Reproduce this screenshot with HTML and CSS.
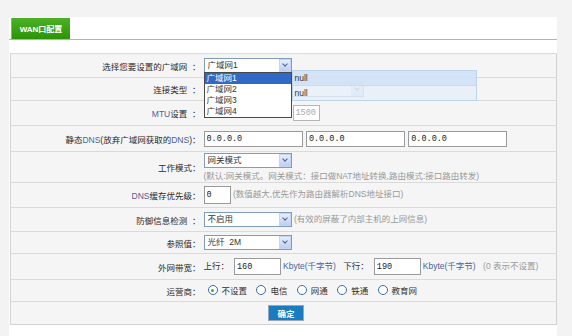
FILE: index.html
```html
<!DOCTYPE html>
<html lang="zh-CN">
  <head>
    <meta charset="UTF-8" />
    <title>WAN口配置</title>
    <link rel="stylesheet" href="styles.css">
  </head>
  <body>
    <div class="panel">
      <div class="tabbar">
        <div class="tab">WAN口配置</div>
      </div>

      <table class="form">
        <tr class="r24">
          <td class="label">选择您要设置的广域网&nbsp;&nbsp;：</td>
          <td class="value">
            <div class="select-wrap">
              <div class="select"><span>广域网1</span><i class="arrow"></i></div>
              <!-- 连接类型的提示层 -->
              <div class="ghost">
                <div class="ghost-top">null</div>
                <div class="ghost-bottom">null</div>
              </div>
              <ul class="dropdown">
                <li class="active">广域网1</li>
                <li>广域网2</li>
                <li>广域网3</li>
                <li>广域网4</li>
              </ul>
            </div>
          </td>
        </tr>
        <tr class="r23">
          <td class="label">连接类型&nbsp;&nbsp;：</td>
          <td class="value">
            <div class="select wide faded"><span></span><i class="arrow"></i></div>
          </td>
        </tr>
        <tr class="r25">
          <td class="label"><em>MTU</em>设置&nbsp;&nbsp;：</td>
          <td class="value">
            <span class="gap"></span><input class="text short mtu" value="1500" disabled>
          </td>
        </tr>
        <tr class="r26">
          <td class="label">静态<em>DNS</em>(放弃广域网获取的<em>DNS</em>)：</td>
          <td class="value">
            <input class="text dns" value="0.0.0.0">
            <input class="text dns" value="0.0.0.0">
            <input class="text dns" value="0.0.0.0">
          </td>
        </tr>
        <tr class="r31">
          <td class="label">工作模式：</td>
          <td class="value">
            <div class="select"><span>网关模式</span><i class="arrow"></i></div>
            <div class="hint">(默认:网关模式。网关模式：接口做NAT地址转换,路由模式:接口路由转发)</div>
          </td>
        </tr>
        <tr class="r25">
          <td class="label"><em>DNS</em>缓存优先级：</td>
          <td class="value">
            <input class="text short cache" value="0">
            <span class="hint">(数值越大,优先作为路由器解析DNS地址接口)</span>
          </td>
        </tr>
        <tr class="r24">
          <td class="label">防御信息检测&nbsp;&nbsp;：</td>
          <td class="value">
            <div class="select"><span>不启用</span><i class="arrow"></i></div>
            <span class="hint">(有效的屏蔽了内部主机的上网信息)</span>
          </td>
        </tr>
        <tr class="r22">
          <td class="label">参照值：</td>
          <td class="value">
            <div class="select"><span>光纤&nbsp; 2M</span><i class="arrow"></i></div>
          </td>
        </tr>
        <tr class="r26">
          <td class="label">外网带宽：</td>
          <td class="value">
            上行：<input class="text band" value="160"><span class="unit">Kbyte(千字节)</span>
            下行：<input class="text band" value="190"><span class="unit">Kbyte(千字节)</span>
            <span class="hint">(0 表示不设置)</span>
          </td>
        </tr>
        <tr class="r22">
          <td class="label">运营商：</td>
          <td class="value radios">
            <label><i class="radio checked"></i>不设置</label>
            <label><i class="radio"></i>电信</label>
            <label><i class="radio"></i>网通</label>
            <label><i class="radio"></i>铁通</label>
            <label><i class="radio"></i>教育网</label>
          </td>
        </tr>
        <tr class="r23">
          <td colspan="2" class="actions">
            <button class="btn">确定</button>
          </td>
        </tr>
      </table>
    </div>
  </body>
</html>
```

FILE: styles.css
```css
/* 基本样式 */
* {
  margin: 0;
  padding: 0;
  box-sizing: border-box;
}

body {
  background-color: #f3f3f3;
  color: #333;
  font-family: "Liberation Sans", "Noto Sans CJK SC", sans-serif;
  font-size: 8.5px;
  padding: 17px 0 0 9px;
}

.panel {
  width: 548px;
  height: 319px;
  background-color: #fff;
}

/* 标签栏 */
.tabbar {
  height: 23px;
  padding: 1px 0 0 2px;
  border-bottom: 1px solid #b3b3b3;
}

.tab {
  width: 59px;
  height: 21px;
  background: linear-gradient(#4cb225, #2b9406);
  border-left: 1px solid #6cc84a;
  color: #fff;
  font-weight: bold;
  font-size: 8px;
  display: flex;
  align-items: center;
  justify-content: center;
}

/* 表单表格 */
.form {
  margin: 13px 0 0 1px;
  width: 547px;
  border-collapse: collapse;
  border: 1px solid #d2d2d2;
}

.form td {
  background-color: #f5f5f5;
  border-top: 1px solid #dadada;
  vertical-align: middle;
  white-space: nowrap;
}

.r22 { height: 22px; }
.r23 { height: 23px; }
.r24 { height: 24px; }
.r25 { height: 25px; }
.r26 { height: 26px; }
.r31 { height: 31px; }

.label {
  width: 192px;
  text-align: right;
  padding-right: 2px;
  color: #2a2a2a;
}

.label em,
.unit {
  font-style: normal;
  color: #4f5f96;
}

.value {
  padding-left: 1px;
}

/* 下拉框 */
.select {
  display: inline-flex;
  align-items: center;
  vertical-align: middle;
  width: 88px;
  height: 15px;
  border: 1px solid #7f9db9;
  background-color: #fff;
}

.select span {
  flex: 1;
  padding-left: 3px;
  line-height: 13px;
}

.select.wide {
  width: 160px;
}

.select.faded {
  opacity: 0.35;
}

.arrow {
  width: 12px;
  height: 13px;
  border: 1px solid #c2d4f8;
  background: linear-gradient(#e6eefc, #bccff3);
  position: relative;
}

.arrow::after {
  content: "";
  position: absolute;
  left: 3px;
  top: 2px;
  width: 3px;
  height: 3px;
  border-right: 1.5px solid #4d6185;
  border-bottom: 1.5px solid #4d6185;
  transform: rotate(45deg);
}

.select-wrap {
  position: relative;
  display: inline-block;
  vertical-align: middle;
}

/* 打开的下拉列表 */
.dropdown {
  position: absolute;
  top: 14px;
  left: 0;
  width: 88px;
  list-style: none;
  background-color: #fff;
  border: 1px solid #4a4a4a;
  z-index: 3;
}

.dropdown li {
  height: 11px;
  line-height: 11px;
  padding-left: 2px;
}

.dropdown li.active {
  background-color: #316ac5;
  color: #fff;
}

/* 半透明提示层 */
.ghost {
  position: absolute;
  top: 12px;
  left: 88px;
  width: 185px;
  height: 31px;
  border: 1px solid #bcd3ec;
  background-color: rgba(222, 235, 249, 0.55);
  z-index: 2;
}

.ghost-top {
  height: 15px;
  line-height: 14px;
  padding-left: 2px;
  background-color: rgba(206, 225, 245, 0.8);
  border-bottom: 1px solid #c8dbef;
}

.ghost-bottom {
  line-height: 14px;
  padding-left: 2px;
}

/* 输入框 */
.text {
  height: 16px;
  border: 1px solid #9a9a9a;
  background-color: #fff;
  font-family: "Liberation Mono", "Noto Sans CJK SC", monospace;
  font-size: 8.5px;
  color: #222;
  padding-left: 2px;
  vertical-align: middle;
}

.dns {
  width: 99px;
  margin-right: 1px;
}

.short {
  width: 27px;
}

.mtu {
  color: #aaa;
  border-color: #b5b5b5;
}

.gap {
  display: inline-block;
  width: 89px;
}

.cache {
  height: 18px;
}

.band {
  width: 47px;
  height: 17px;
  margin-left: 5px;
}

.unit {
  margin: 0 5px 0 2px;
}

.hint {
  color: #999;
}

div.hint {
  margin-top: 1px;
}

/* 单选 */
.radios label {
  display: inline-flex;
  align-items: center;
  margin-right: 3px;
}

.radio {
  width: 10px;
  height: 10px;
  border: 1px solid #3c6ea5;
  border-radius: 50%;
  background-color: #fff;
  margin: 0 4px 0 4px;
  position: relative;
}

.radio.checked::after {
  content: "";
  position: absolute;
  left: 2.5px;
  top: 2.5px;
  width: 3px;
  height: 3px;
  border-radius: 50%;
  background-color: #2eb82e;
}

/* 按钮 */
.actions {
  text-align: center;
  padding-left: 5px;
}

.btn {
  width: 36px;
  height: 16px;
  background-color: #1a7cc0;
  color: #fff;
  border: 1px solid #9aa7b3;
  font-family: "Noto Sans CJK SC", sans-serif;
  font-size: 8.5px;
  font-weight: bold;
}
```
